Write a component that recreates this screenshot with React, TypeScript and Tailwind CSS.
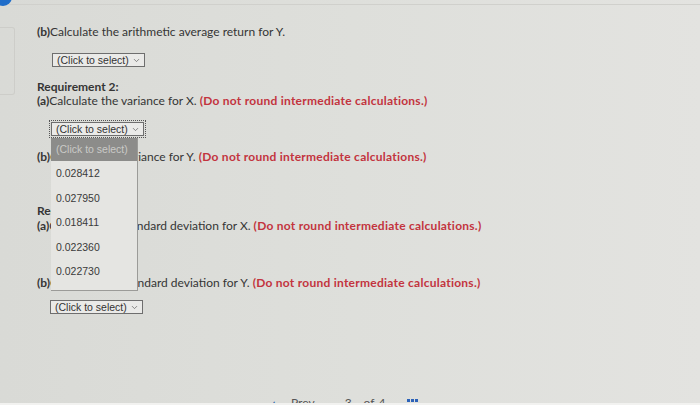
import { ChevronDown } from 'lucide-react';

const font = { fontFamily: 'Lato, "Open Sans", Arial, sans-serif' };
const arial = { fontFamily: '"Liberation Sans", Arial, sans-serif' };

function SelectBox({ focused = false }: { focused?: boolean }) {
  return (
    <div className={`flex w-fit ${focused ? 'outline-1 outline-dotted outline-[#555] outline-offset-1' : ''}`}>
      <div
        className="flex items-center h-[14px] pl-[4px] pr-[3px] gap-[3px] border border-[#6e6e6e] bg-[#eaeae8] text-[10.5px] leading-none text-[#333]"
        style={arial}
      >
        <span>(Click to select)</span>
        <ChevronDown className="size-[9px] text-[#666]" strokeWidth={2} />
      </div>
    </div>
  );
}

function Note() {
  return <span className="font-bold text-[#c3343e] tracking-[0.25px]">(Do not round intermediate calculations.)</span>;
}

const options = ['0.028412', '0.027950', '0.018411', '0.022360', '0.022730'];

export default function App() {
  return (
    <div
      className="relative w-[700px] h-[405px] overflow-hidden bg-gradient-to-r from-[#d9dad6] via-[#dedfdb] to-[#e3e3e0] text-[#353535] text-[12px]"
      style={font}
    >
      {/* top edge */}
      <div className="absolute -left-[6px] -top-[12px] size-[18px] rounded-full bg-[#1f6dc9]" />
      <div className="h-[5px] border-b border-[#d0d0cc]" />

      <div className="flex">
        <div className="w-[15px] mt-[22px] h-[68px] border-r border-y rounded-r-[3px] border-[#cdcdc9] mr-[22px]" />
        <div className="flex flex-col relative">
          <p className="mt-[19px] leading-[16px]"><b>(b)</b>Calculate the arithmetic average return for Y.</p>
          <div className="flex mt-[13px] ml-[15px]"><SelectBox /></div>

          <p className="mt-[13px] leading-[14px] font-bold">Requirement 2:</p>
          <p className="leading-[14px]"><b>(a)</b>Calculate the variance for X. <Note /></p>
          <div className="flex mt-[14px] ml-[14px]"><SelectBox focused /></div>

          <p className="mt-[13px] leading-[16px]"><b>(b)</b>Calculate the variance for Y. <Note /></p>

          <p className="mt-[39px] leading-[14px] font-bold">Requirement 3:</p>
          <p className="leading-[16px]"><b>(a)</b>Calculate the standard deviation for X. <Note /></p>

          <p className="mt-[41px] leading-[16px]"><b>(b)</b>Calculate the standard deviation for Y. <Note /></p>
          <div className="flex mt-[9px] ml-[13px]"><SelectBox /></div>

          {/* open dropdown list */}
          <div
            className="absolute left-[14px] top-[133px] w-[87px] pb-[6px] bg-[#e5e5e2] border-r border-b border-[#9b9b98] text-[10.5px] text-[#3a3a3a]"
            style={arial}
          >
            <div className="h-[23px] bg-[#8c8c8a] text-[#cacac7] pl-[5px] pt-[4px]">(Click to select)</div>
            {options.map((o) => (
              <div key={o} className="h-[24.5px] pl-[5px] pt-[2px] flex items-center">{o}</div>
            ))}
          </div>
        </div>
      </div>

      {/* bottom nav, cut off */}
      <div className="absolute left-0 right-0 top-[397px] h-[8px] flex items-start pl-[272px] text-[#555] text-[12px] leading-none">
        <span className="text-[#2a5fa8] font-bold w-[19px]">‹</span>
        <span>Prev</span>
        <span className="ml-[30px]">3</span>
        <span className="ml-[12px]">of</span>
        <span className="ml-[4px]">4</span>
        <span className="ml-[22px] mt-[2px] grid grid-cols-3 gap-[1px]">
          <span className="size-[3px] bg-[#2c62b8]" />
          <span className="size-[3px] bg-[#2c62b8]" />
          <span className="size-[3px] bg-[#2c62b8]" />
        </span>
      </div>
      <div className="absolute left-0 right-0 bottom-0 h-[2px] bg-[#f2f2f0]" />
    </div>
  );
}
